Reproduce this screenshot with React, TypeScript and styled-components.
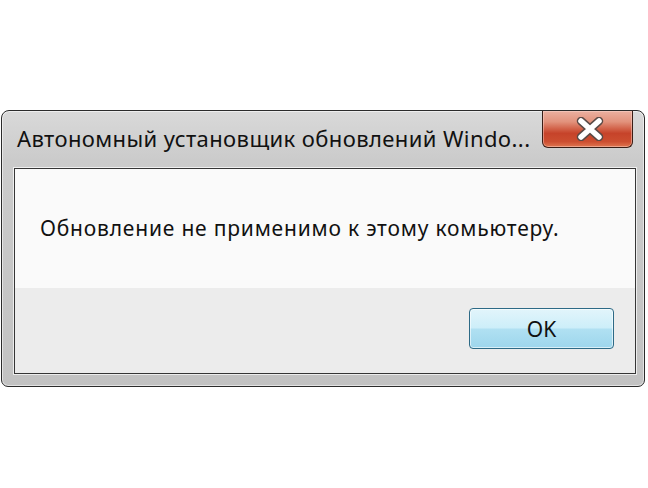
import React from "react";
import styled, { createGlobalStyle } from "styled-components";

const Global = createGlobalStyle`
  html, body { margin: 0; padding: 0; background: #ffffff; }
  #root { width: 648px; height: 488px; overflow: hidden; }
`;

const Page = styled.div`
  width: 648px;
  height: 488px;
  box-sizing: border-box;
  padding: 110px 3px 0 1px;
  background: #ffffff;
  font-family: "Noto Sans", "Open Sans", sans-serif;
`;

const Window = styled.div`
  height: 277px;
  box-sizing: border-box;
  border: 1px solid #2b2b2b;
  border-radius: 8px 8px 7px 7px;
  background: linear-gradient(180deg, #d9d9d9 0%, #cbcbcb 18%, #c6c6c6 60%, #c2c2c2 100%);
  box-shadow: inset 0 0 0 1px rgba(255, 255, 255, 0.55);
  display: flex;
  flex-direction: column;
  padding: 0 8px 12px 12px;
`;

const TitleBar = styled.div`
  height: 57px;
  display: flex;
  align-items: flex-start;
  justify-content: space-between;
  flex: none;
`;

const Title = styled.div`
  padding: 12px 0 0 3px;
  font-size: 22px;
  letter-spacing: 0.4px;
  line-height: 30px;
  color: #111;
  white-space: nowrap;
`;

const CloseButton = styled.div`
  width: 91px;
  height: 37px;
  box-sizing: border-box;
  margin-right: 3px;
  border: 1px solid #3a1e16;
  border-top: none;
  border-radius: 0 0 6px 6px;
  background: linear-gradient(
    180deg,
    #ebb0a0 0%,
    #e2927c 30%,
    #d3654c 48%,
    #c6432a 62%,
    #cc4e30 85%,
    #df7650 100%
  );
  box-shadow: inset 0 0 0 1px rgba(255, 220, 210, 0.45);
  display: flex;
  align-items: center;
  justify-content: center;
  padding-left: 4px;
`;

const Frame = styled.div`
  flex: 1;
  display: flex;
  flex-direction: column;
  border: 1px solid #363636;
  box-shadow: 0 0 0 1px rgba(255, 255, 255, 0.7);
  background: #f9f9f9;
`;

const Body = styled.div`
  height: 119px;
  box-sizing: border-box;
  padding: 45px 0 0 25px;
  background: #fafafa;
  font-size: 21px;
  letter-spacing: 0.8px;
  line-height: 28px;
  color: #111;
  white-space: nowrap;
`;

const Footer = styled.div`
  flex: 1;
  background: #ececec;
  display: flex;
  justify-content: flex-end;
  align-items: flex-start;
  padding: 20px 21px 0 0;
`;

const OkButton = styled.div`
  width: 145px;
  height: 41px;
  box-sizing: border-box;
  border: 1px solid #2d6a86;
  border-radius: 4px;
  background: linear-gradient(180deg, #e2f5fb 0%, #cdeef9 48%, #b0e0f2 52%, #9dd6ec 100%);
  box-shadow: inset 0 0 0 1px rgba(255, 255, 255, 0.6);
  display: flex;
  align-items: center;
  justify-content: center;
  font-size: 21px;
  color: #111;
`;

const XIcon = () => (
  <svg width="28" height="24" viewBox="0 0 28 24">
    <path d="M5 4 L23 20 M23 4 L5 20" stroke="#5a4a46" strokeWidth="8.5" strokeLinecap="round" />
    <path d="M5 4 L23 20 M23 4 L5 20" stroke="#ffffff" strokeWidth="5.5" strokeLinecap="round" />
  </svg>
);

export default function App() {
  return (
    <>
      <Global />
      <Page>
        <Window>
          <TitleBar>
            <Title>Автономный установщик обновлений Windo...</Title>
            <CloseButton>
              <XIcon />
            </CloseButton>
          </TitleBar>
          <Frame>
            <Body>Обновление не применимо к этому комьютеру.</Body>
            <Footer>
              <OkButton>OK</OkButton>
            </Footer>
          </Frame>
        </Window>
      </Page>
    </>
  );
}
